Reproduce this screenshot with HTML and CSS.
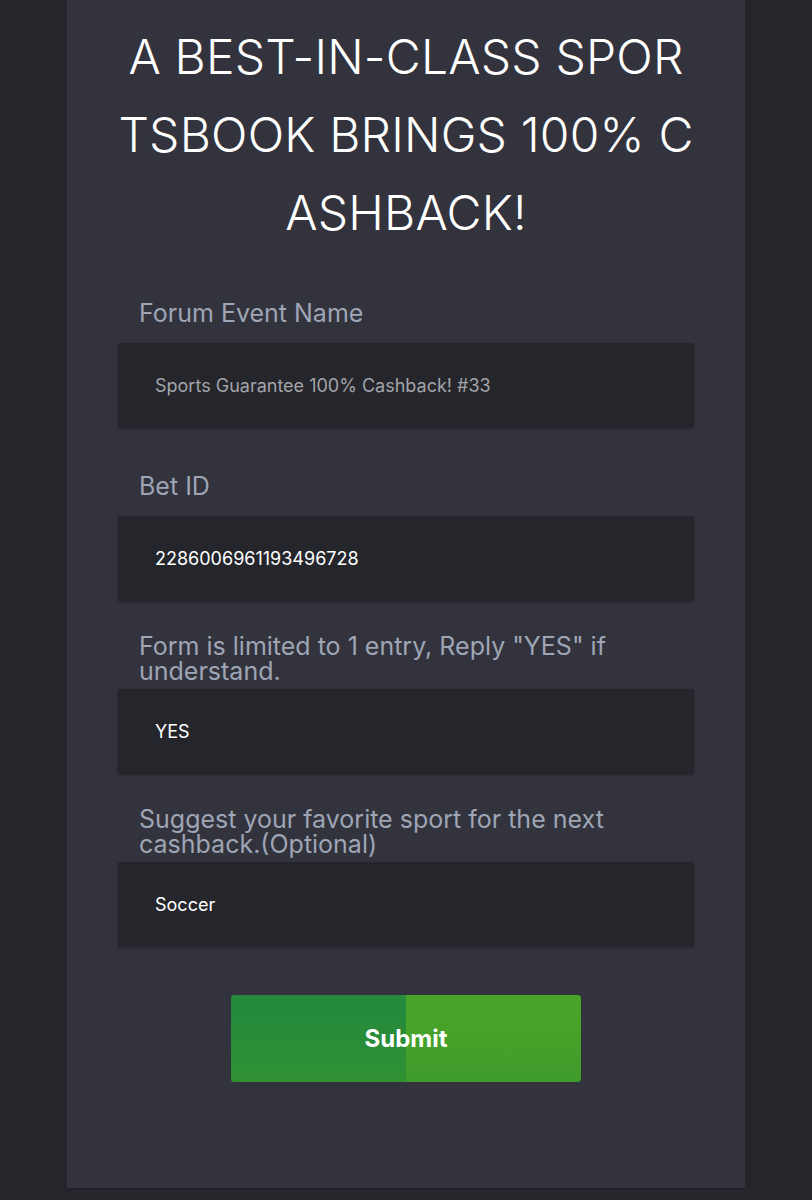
FILE: index.html
```html
<!DOCTYPE html>
<html lang="en">
<head>
<meta charset="utf-8">
<title>Cashback Form</title>
<link rel="stylesheet" href="styles.css">
</head>
<body>
<main class="card">
  <h1 class="title">A BEST-IN-CLASS SPORTSBOOK BRINGS 100% CASHBACK!</h1>
  <form class="form">
    <div class="field">
      <label class="label">Forum Event Name</label>
      <div class="input muted">Sports Guarantee 100% Cashback! #33</div>
    </div>
    <div class="field">
      <label class="label">Bet ID</label>
      <div class="input">2286006961193496728</div>
    </div>
    <div class="field">
      <label class="label">Form is limited to 1 entry, Reply "YES" if understand.</label>
      <div class="input">YES</div>
    </div>
    <div class="field">
      <label class="label">Suggest your favorite sport for the next cashback.(Optional)</label>
      <div class="input">Soccer</div>
    </div>
    <div class="actions">
      <button type="button" class="submit">Submit</button>
    </div>
  </form>
</main>
</body>
</html>
```

FILE: styles.css
```css
html, body {
  margin: 0;
  padding: 0;
}
body {
  background: #25262b;
  font-family: Inter, "Noto Sans", sans-serif;
  min-height: 1200px;
}
.card {
  box-sizing: border-box;
  width: 678px;
  margin-left: 67px;
  height: 1188px;
  background: #33333d;
  padding: 18px 51px 0;
  box-shadow: 0 1px 1px rgba(0,0,0,0.15);
}
.title {
  margin: 0;
  font-weight: 300;
  font-size: 48px;
  letter-spacing: 0.2px;
  line-height: 78px;
  color: #ffffff;
  text-align: center;
  word-break: break-all;
}
.form {
  display: flex;
  flex-direction: column;
  padding-top: 37px;
}
.field {
  display: flex;
  flex-direction: column;
}
.field + .field {
  margin-top: 34px;
}
.label {
  height: 48px;
  display: flex;
  align-items: center;
  padding-left: 21px;
  margin-bottom: 6px;
  font-size: 25px;
  line-height: 25px;
  color: #9ea5b5;
}
.input {
  box-sizing: border-box;
  height: 85px;
  display: flex;
  align-items: center;
  padding-left: 37px;
  background: #25262b;
  border-radius: 2px;
  box-shadow: 0 1px 3px rgba(0,0,0,0.25);
  font-size: 18px;
  color: #ffffff;
}
.input.muted {
  color: #a3a4aa;
}
.actions {
  display: flex;
  justify-content: center;
  margin-top: 48px;
}
.submit {
  width: 350px;
  height: 87px;
  border: 0;
  border-radius: 3px;
  background:
    linear-gradient(to bottom, rgba(58,152,46,0) 0%, rgba(58,152,46,0) 25%, rgba(56,150,46,0.6) 100%),
    linear-gradient(to right, #258a3b 50%, #48a428 50%);
  font-family: Inter, "Noto Sans", sans-serif;
  font-weight: 700;
  font-size: 24px;
  color: #ffffff;
}
```
